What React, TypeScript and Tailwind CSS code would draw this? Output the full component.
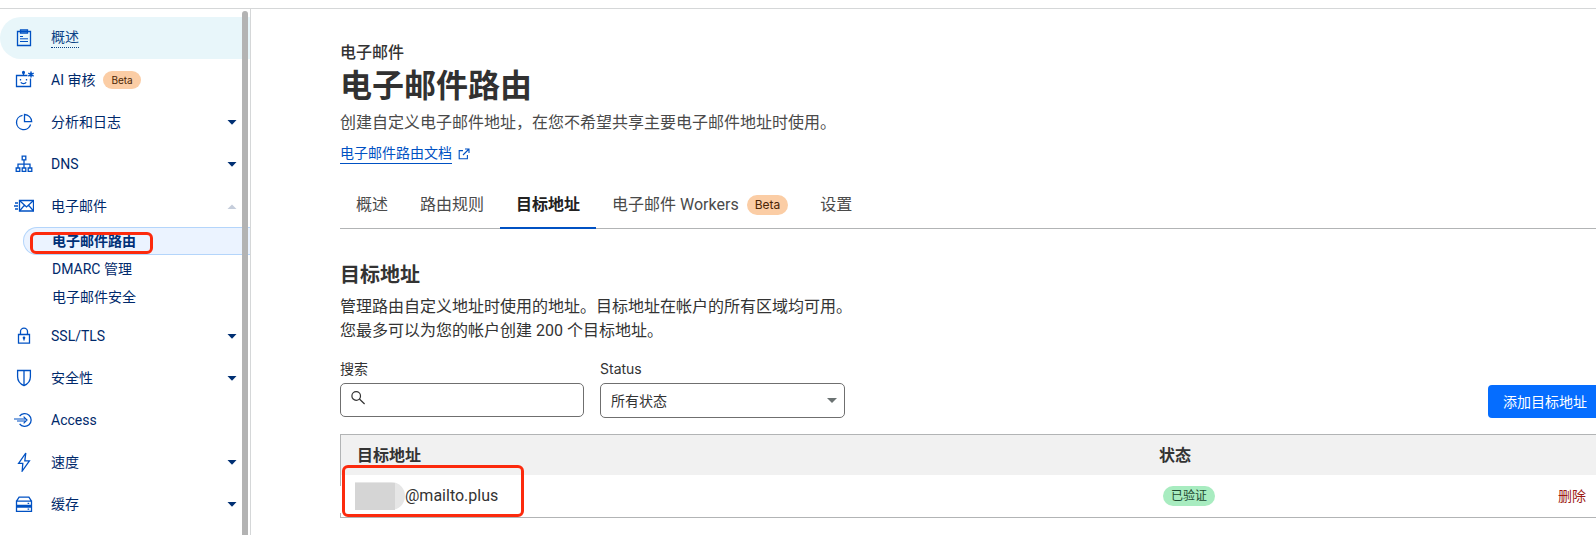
import type { ReactNode } from 'react';

type NavItem = {
  label: string;
  icon: ReactNode;
  caret?: 'down' | 'up';
  badge?: string;
  active?: boolean;
  children?: { label: string; current?: boolean }[];
};

function Icon({ children }: { children: ReactNode }) {
  return (
    <svg
      aria-hidden="true"
      width="20"
      height="20"
      viewBox="0 0 20 20"
      fill="none"
      stroke="currentColor"
      strokeWidth="1.3"
      className="shrink-0 text-[#0051c3]"
    >
      {children}
    </svg>
  );
}

const clipboard = (
  <Icon>
    <path d="M3.5 3.5h13v14h-13z" />
    <path d="M6.5 2h7v3h-7z" />
    <path d="M6 8.5h3M6 10.8h8M6 13.5h8" strokeWidth="1" />
  </Icon>
);

const robot = (
  <Icon>
    <path d="M13.5 5.5h-11v11h14v-8M9.5 5.5V2" />
    <circle cx="9.5" cy="2.4" r=".9" fill="currentColor" />
    <path d="M6.5 9v1.6M12.5 9v1.6M6.8 12.4c1.2 1.5 4.2 1.5 5.4 0" />
    <path d="M17 1.6v6M14.3 3.1l5.4 3M14.3 6.1l5.4-3" strokeWidth="1.5" />
  </Icon>
);

const pie = (
  <Icon>
    <path d="M8.5 3.3A7.2 7.2 0 1 0 16.6 12.5" />
    <path d="M10.5 2.5v7.2h7.2a7.4 7.4 0 0 0-7.2-7.2z" />
  </Icon>
);

const tree = (
  <Icon>
    <path d="M8.2 2.2h3.6v3.6H8.2zM2.2 14h3.6v3.4H2.2zM8.2 14h3.6v3.4H8.2zM14.2 14h3.6v3.4h-3.6z" />
    <path d="M10 5.8V14M4 14v-3.8h12V14" />
  </Icon>
);

const mail = (
  <Icon>
    <path d="M5.5 4.5h14v10.5h-14z" />
    <path d="M5.5 4.5l7 6.4 7-6.4M5.5 15l5-5.8M19.5 15l-5-5.8M1 7h3M0 10h4M1 13h3" />
  </Icon>
);

const lock = (
  <Icon>
    <path d="M4.5 8.5h11v8.7h-11z" />
    <path d="M6.5 8.5V5.6a3.5 3.5 0 0 1 7 0v2.9M10 11.4v3" />
    <circle cx="10" cy="11.8" r=".7" fill="currentColor" />
  </Icon>
);

const shield = (
  <Icon>
    <path d="M3.6 2.5h12.8v6.3c0 4.4-3 7.4-6.4 8.8-3.4-1.4-6.4-4.4-6.4-8.8zM10 2.5v15" />
  </Icon>
);

const access = (
  <Icon>
    <path d="M5.6 6.2a6.4 6.4 0 1 1 0 7.6" />
    <path d="M0 9h12.4M3 11h9.4M9.6 6.6L13 10l-3.4 3.4" strokeWidth="1.2" />
  </Icon>
);

const bolt = (
  <Icon>
    <path d="M11.8 1L4.6 11.4h4.2l-.6 7.6L15.4 8.8h-4.6z" />
  </Icon>
);

const drive = (
  <Icon>
    <path d="M2.5 7.2l2.6-4h9.8l2.6 4M2.5 7.2h15v4.3h-15zM2.5 13h15v4.3h-15zM13.6 9.4h1.6M13.6 15.2h1.6" />
  </Icon>
);

const navItems: NavItem[] = [
  { label: '概述', icon: clipboard, active: true },
  { label: 'AI 审核', icon: robot, badge: 'Beta' },
  { label: '分析和日志', icon: pie, caret: 'down' },
  { label: 'DNS', icon: tree, caret: 'down' },
  {
    label: '电子邮件',
    icon: mail,
    caret: 'up',
    children: [
      { label: '电子邮件路由', current: true },
      { label: 'DMARC 管理' },
      { label: '电子邮件安全' },
    ],
  },
  { label: 'SSL/TLS', icon: lock, caret: 'down' },
  { label: '安全性', icon: shield, caret: 'down' },
  { label: 'Access', icon: access },
  { label: '速度', icon: bolt, caret: 'down' },
  { label: '缓存', icon: drive, caret: 'down' },
];

function Caret({ direction }: { direction: 'down' | 'up' }) {
  return (
    <svg
      aria-hidden="true"
      width="10"
      height="5"
      viewBox="0 0 10 5"
      className={direction === 'up' ? 'text-[#c5cddb]' : 'text-[#002f73]'}
    >
      <path fill="currentColor" d={direction === 'up' ? 'M.5 5L5 .5 9.5 5z' : 'M.5 0h9L5 4.8z'} />
    </svg>
  );
}

function SideNav() {
  return (
    <nav className="relative w-[251px] shrink-0 border-r border-[#d5d7d8] pt-2 text-sm text-[#00296b]">
      <ul>
        {navItems.map((item) => (
          <li key={item.label}>
            <a
              href="#"
              className={`flex h-[42px] items-center pl-3.5 pr-[13px] ${
                item.active ? 'rounded-l-full bg-[#e8f6fa] text-[#0b4286]' : ''
              }`}
            >
              {item.icon}
              <span
                className={`ml-[17px] ${item.active ? 'border-b border-dotted border-[#0b4286] leading-[19px]' : ''}`}
              >
                {item.label}
              </span>
              {item.badge && (
                <span className="ml-2 rounded-full bg-[#fbcda5] px-2 font-['Inter',sans-serif] text-[10px] leading-[18px] text-[#4a2504]">
                  {item.badge}
                </span>
              )}
              {item.caret && (
                <span className="ml-auto">
                  <Caret direction={item.caret} />
                </span>
              )}
            </a>
            {item.children && (
              <ul className="mb-1 pl-[23px]">
                {item.children.map((child) => (
                  <li key={child.label} className="relative">
                    <a
                      href="#"
                      className={`flex h-7 items-center rounded-l-full border border-r-0 pl-7 ${
                        child.current
                          ? 'border-[#b4d5fb] bg-[#ebf3ff] font-semibold text-[#003077]'
                          : 'border-transparent'
                      }`}
                    >
                      {child.label}
                    </a>
                    {child.current && (
                      <span className="pointer-events-none absolute left-[7px] top-[5px] h-[22px] w-[123px] rounded-md border-[3px] border-[#fc2a0d]" />
                    )}
                  </li>
                ))}
              </ul>
            )}
          </li>
        ))}
      </ul>
      <span className="absolute bottom-0 right-0.5 top-0.5 w-1.5 rounded-t-full bg-[#b3b3b3]" />
    </nav>
  );
}

const tabs = [
  { label: '概述' },
  { label: '路由规则' },
  { label: '目标地址', current: true },
  { label: '电子邮件 Workers', badge: 'Beta' },
  { label: '设置' },
];

function Tabs() {
  return (
    <nav className="mt-[17px] flex border-b border-[#b2b4b5]">
      {tabs.map((tab) => (
        <a
          key={tab.label}
          href="#"
          className={`-mb-px flex h-12 items-center whitespace-nowrap border-b-2 px-4 pt-0.5 ${
            tab.current ? 'border-[#0051c3] font-semibold text-[#222]' : 'border-transparent text-[#4a4a4a]'
          }`}
        >
          {tab.label}
          {tab.badge && (
            <span className="ml-2 rounded-full bg-[#fbcda5] px-2 font-['Inter',sans-serif] text-xs leading-5 text-[#4a2504]">
              {tab.badge}
            </span>
          )}
        </a>
      ))}
    </nav>
  );
}

function Filters() {
  return (
    <div className="mt-4 flex items-start gap-4 text-sm">
      <div className="w-[244px]">
        <label htmlFor="search" className="block leading-5">
          搜索
        </label>
        <div className="mt-1 flex h-[34px] items-center rounded-[5px] border border-[#6f6f6f] pl-2.5">
          <svg
            aria-hidden="true"
            width="16"
            height="16"
            viewBox="0 0 16 16"
            fill="none"
            stroke="#333"
            strokeWidth="1.2"
            className="mb-1 shrink-0"
          >
            <circle cx="5.2" cy="6" r="4.3" />
            <path d="M8.4 9l5.2 5" />
          </svg>
          <input id="search" type="text" className="w-full bg-transparent px-2 outline-none" />
        </div>
      </div>
      <div className="w-[245px]">
        <label htmlFor="status" className="block font-['Inter',sans-serif] leading-5">
          Status
        </label>
        <div className="relative mt-1">
          <select
            id="status"
            className="block h-[35px] w-full appearance-none rounded-[5px] border border-[#6f6f6f] bg-white pl-2.5 text-sm text-[#333]"
          >
            <option>所有状态</option>
          </select>
          <svg
            aria-hidden="true"
            width="10"
            height="5"
            viewBox="0 0 10 5"
            className="pointer-events-none absolute right-2 top-[15px]"
          >
            <path fill="#6b7272" d="M0 0h10L5 5z" />
          </svg>
        </div>
      </div>
      <button
        type="button"
        className="ml-auto h-[33px] self-end rounded-l-[4px] bg-[#056dff] pl-[15px] pr-[9px] text-white"
      >
        添加目标地址
      </button>
    </div>
  );
}

function AddressTable() {
  return (
    <table className="mt-4 w-full table-fixed border border-r-0 border-[#b2b4b5] text-left">
      <thead className="bg-[#f1f1f1]">
        <tr className="h-10">
          <th className="w-[64%] pl-4 pt-0.5 font-semibold">目标地址</th>
          <th className="pl-[15px] pt-0.5 font-semibold">状态</th>
          <th className="w-24" aria-label="操作" />
        </tr>
      </thead>
      <tbody>
        <tr className="h-[43px]">
          <td className="relative pl-[14px] pt-px">
            <span className="absolute -left-px top-[11px] h-[27px] w-px bg-white" />
            <span className="flex items-center">
              <span className="h-7 w-[50px] rounded-r-full bg-[#e6e6e6] pt-px">
                <span className="block h-[27px] w-10 bg-[#d5d5d5]" />
              </span>
              <span>@mailto.plus</span>
            </span>
            <span className="pointer-events-none absolute -top-2.5 left-px h-[52px] w-[182px] rounded-md border-[3px] border-[#fc2a0d]" />
          </td>
          <td className="pl-[19px]">
            <span className="block w-fit rounded-full bg-[#a8ecc0] px-2 text-xs leading-5 text-[#1d4a31]">已验证</span>
          </td>
          <td className="pr-2.5 pt-px text-right text-sm">
            <button type="button" className="text-[#9c1a14]">
              删除
            </button>
          </td>
        </tr>
      </tbody>
    </table>
  );
}

export default function App() {
  return (
    <div className="flex h-screen flex-col overflow-hidden bg-white pt-2 font-['Roboto','Noto_Sans_CJK_SC',sans-serif] text-[#333]">
      <div className="flex min-h-0 flex-1 border-t border-[#d5d7d8]">
        <SideNav />
        <main className="min-w-0 flex-1 pl-[89px] pt-[34px]">
          <header>
            <p className="font-medium leading-5">电子邮件</p>
            <h1 className="mt-[3px] text-[32px] font-bold leading-10 text-[#313131]">电子邮件路由</h1>
            <p className="mt-[5px] leading-6 text-[#4a4a4a]">
              创建自定义电子邮件地址，在您不希望共享主要电子邮件地址时使用。
            </p>
            <a href="#" className="mt-2 flex w-fit items-center gap-1.5 text-sm text-[#0051c3]">
              <span className="border-b border-[#0051c3] leading-5">电子邮件路由文档</span>
              <svg
                aria-hidden="true"
                width="12"
                height="12"
                viewBox="0 0 12 12"
                fill="none"
                stroke="currentColor"
                strokeWidth="1.1"
              >
                <path d="M5 2.6H1.2v8.2h8.2V7M7 1h4v4M11 1L5 7" />
              </svg>
            </a>
          </header>
          <Tabs />
          <section>
            <h2 className="mt-8 text-xl font-semibold leading-7">目标地址</h2>
            <p className="mt-1.5 leading-6">
              管理路由自定义地址时使用的地址。目标地址在帐户的所有区域均可用。
              <br />
              您最多可以为您的帐户创建 200 个目标地址。
            </p>
            <Filters />
            <AddressTable />
          </section>
        </main>
      </div>
    </div>
  );
}
